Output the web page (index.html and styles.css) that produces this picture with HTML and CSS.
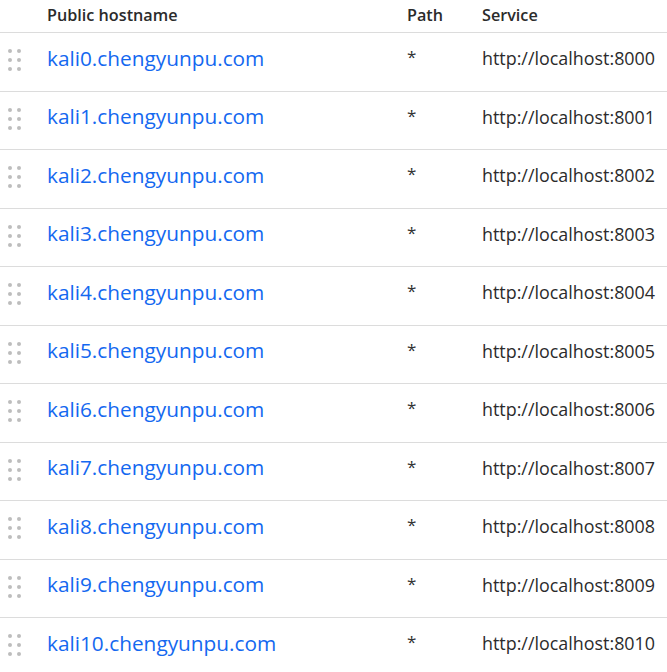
FILE: index.html
```html
<!DOCTYPE html>
<html>
<head>
<meta charset="utf-8">
<link rel="stylesheet" href="styles.css">
</head>
<body>
<div class="table">
  <div class="row head">
    <div class="cell grip-cell"></div>
    <div class="cell">Public hostname</div>
    <div class="cell">Path</div>
    <div class="cell">Service</div>
  </div>
  <div class="row"><div class="cell grip-cell"><span class="grip"><i></i><i></i><i></i><i></i><i></i><i></i></span></div><div class="cell host">kali0.chengyunpu.com</div><div class="cell path">*</div><div class="cell svc">http://localhost:8000</div></div>
  <div class="row"><div class="cell grip-cell"><span class="grip"><i></i><i></i><i></i><i></i><i></i><i></i></span></div><div class="cell host">kali1.chengyunpu.com</div><div class="cell path">*</div><div class="cell svc">http://localhost:8001</div></div>
  <div class="row"><div class="cell grip-cell"><span class="grip"><i></i><i></i><i></i><i></i><i></i><i></i></span></div><div class="cell host">kali2.chengyunpu.com</div><div class="cell path">*</div><div class="cell svc">http://localhost:8002</div></div>
  <div class="row"><div class="cell grip-cell"><span class="grip"><i></i><i></i><i></i><i></i><i></i><i></i></span></div><div class="cell host">kali3.chengyunpu.com</div><div class="cell path">*</div><div class="cell svc">http://localhost:8003</div></div>
  <div class="row"><div class="cell grip-cell"><span class="grip"><i></i><i></i><i></i><i></i><i></i><i></i></span></div><div class="cell host">kali4.chengyunpu.com</div><div class="cell path">*</div><div class="cell svc">http://localhost:8004</div></div>
  <div class="row"><div class="cell grip-cell"><span class="grip"><i></i><i></i><i></i><i></i><i></i><i></i></span></div><div class="cell host">kali5.chengyunpu.com</div><div class="cell path">*</div><div class="cell svc">http://localhost:8005</div></div>
  <div class="row"><div class="cell grip-cell"><span class="grip"><i></i><i></i><i></i><i></i><i></i><i></i></span></div><div class="cell host">kali6.chengyunpu.com</div><div class="cell path">*</div><div class="cell svc">http://localhost:8006</div></div>
  <div class="row"><div class="cell grip-cell"><span class="grip"><i></i><i></i><i></i><i></i><i></i><i></i></span></div><div class="cell host">kali7.chengyunpu.com</div><div class="cell path">*</div><div class="cell svc">http://localhost:8007</div></div>
  <div class="row"><div class="cell grip-cell"><span class="grip"><i></i><i></i><i></i><i></i><i></i><i></i></span></div><div class="cell host">kali8.chengyunpu.com</div><div class="cell path">*</div><div class="cell svc">http://localhost:8008</div></div>
  <div class="row"><div class="cell grip-cell"><span class="grip"><i></i><i></i><i></i><i></i><i></i><i></i></span></div><div class="cell host">kali9.chengyunpu.com</div><div class="cell path">*</div><div class="cell svc">http://localhost:8009</div></div>
  <div class="row"><div class="cell grip-cell"><span class="grip"><i></i><i></i><i></i><i></i><i></i><i></i></span></div><div class="cell host">kali10.chengyunpu.com</div><div class="cell path">*</div><div class="cell svc">http://localhost:8010</div></div>
</div>
</body>
</html>
```
FILE: styles.css
```css
html, body {
  margin: 0;
  padding: 0;
  background: #fff;
  overflow: hidden;
}
body {
  font-family: "Open Sans", "Noto Sans", sans-serif;
  color: #333;
}
.table {
  display: flex;
  flex-direction: column;
}
.row {
  display: grid;
  grid-template-columns: 47px 360px 75px 1fr;
  align-items: center;
  height: 58.5px;
  border-top: 1px solid #dcdcdc;
  box-sizing: border-box;
}
.row.head {
  height: 32px;
  border-top: none;
  font-size: 16.2px;
  font-weight: 600;
  color: #2b2b2b;
  padding-bottom: 2px;
}
.cell {
  white-space: nowrap;
}
.grip-cell {
  display: flex;
  align-items: center;
  padding-left: 8px;
}
.grip {
  display: grid;
  grid-template-columns: 4px 4px;
  column-gap: 5px;
  row-gap: 5px;
  margin-top: -3px;
}
.grip i {
  width: 4px;
  height: 4px;
  border-radius: 50%;
  background: #bdbdbd;
}
.host {
  color: #1468f0;
  font-size: 20.8px;
  font-weight: 500;
  margin-top: -8px;
}
.path {
  font-size: 17px;
  margin-top: -10px;
}
.svc {
  font-size: 17.9px;
  color: #2b2b2b;
  margin-top: -7px;
}
```
